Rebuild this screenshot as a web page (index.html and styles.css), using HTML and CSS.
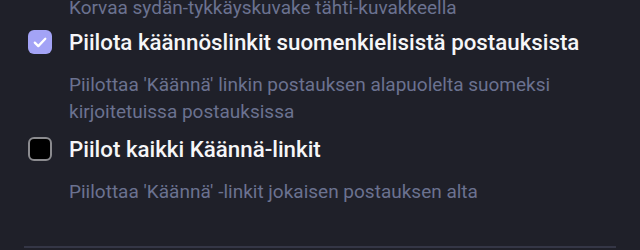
FILE: index.html
```html
<!DOCTYPE html>
<html lang="fi">
<head>
<meta charset="utf-8">
<link rel="stylesheet" href="styles.css">
</head>
<body>
<div class="section">
  <p class="desc desc-top">Korvaa sydän-tykkäyskuvake tähti-kuvakkeella</p>
  <div class="item">
    <label class="row">
      <span class="box box-checked">
        <svg viewBox="0 0 24 24" width="24" height="24"><path d="M6.8 12.6l3.5 3.5L17.3 8.8" fill="none" stroke="#fff" stroke-width="2.3" stroke-linecap="round" stroke-linejoin="round"/></svg>
      </span>
      <span class="title">Piilota käännöslinkit suomenkielisistä postauksista</span>
    </label>
    <p class="desc">Piilottaa 'Käännä' linkin postauksen alapuolelta suomeksi kirjoitetuissa postauksissa</p>
  </div>
  <div class="item">
    <label class="row">
      <span class="box box-empty"></span>
      <span class="title">Piilot kaikki Käännä-linkit</span>
    </label>
    <p class="desc">Piilottaa 'Käännä' -linkit jokaisen postauksen alta</p>
  </div>
  <div class="divider"></div>
</div>
</body>
</html>
```
FILE: styles.css
```css
html, body {
  margin: 0;
  padding: 0;
  background: #1f2029;
  height: 100%;
  overflow: hidden;
}
body {
  font-family: Roboto, "Noto Sans", sans-serif;
}
.section {
  margin-top: -6px;
  padding: 0 24px;
}
.desc {
  margin: 0;
  padding-left: 45px;
  font-size: 19px;
  line-height: 27px;
  color: #6b7290;
  width: 500px;
}
.desc-top {
  width: auto;
}
.item {
  margin-top: 9px;
}
.item + .item {
  margin-top: 12px;
}
.row {
  display: flex;
  align-items: center;
  gap: 17px;
  padding-left: 4px;
  height: 24px;
}
.item .desc {
  margin-top: 17px;
}
.box {
  width: 24px;
  height: 24px;
  box-sizing: border-box;
  border-radius: 6px;
  flex: none;
  display: flex;
  align-items: center;
  justify-content: center;
}
.box-checked {
  background: #a3a3f6;
}
.box-empty {
  background: #000;
  border: 2px solid #8b8b8f;
}
.title {
  font-size: 22.3px;
  font-weight: 500;
  color: #f6f6f8;
  white-space: nowrap;
}
.divider {
  margin-top: 41px;
  height: 2px;
  background: #343646;
}
```
